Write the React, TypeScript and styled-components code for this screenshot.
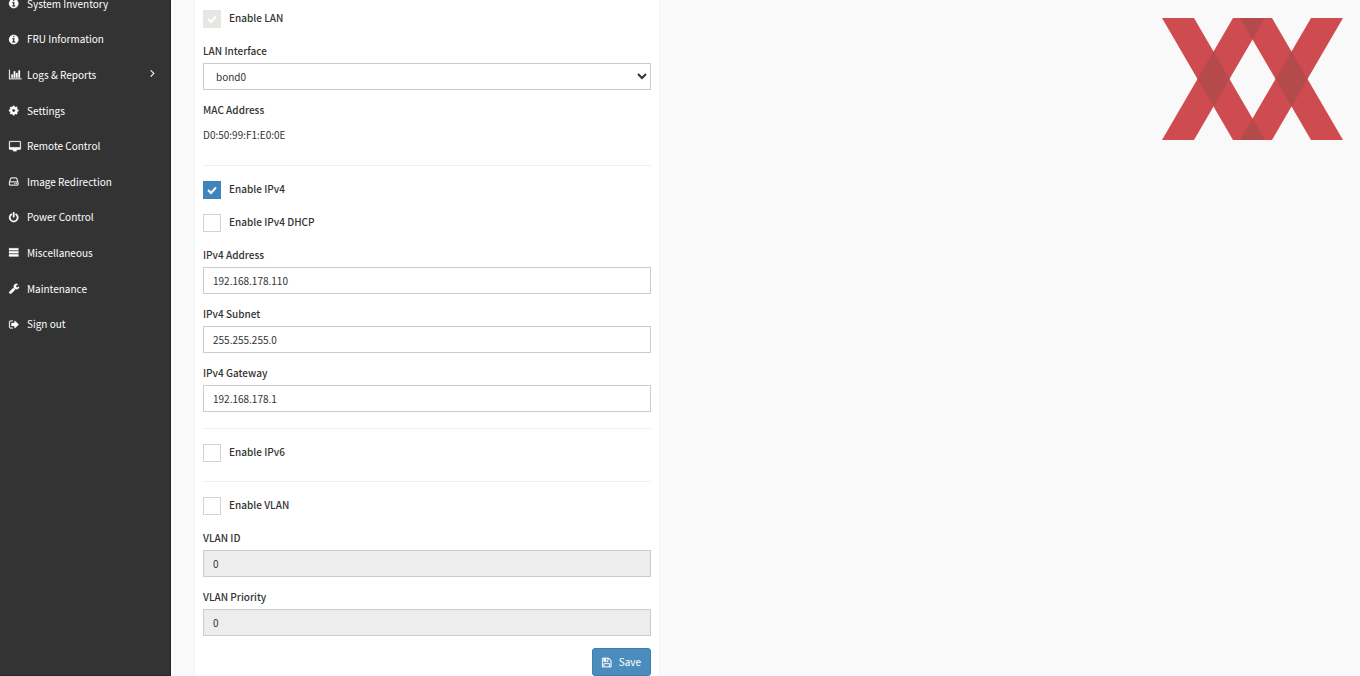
import React, { useState } from 'react';
import styled, { createGlobalStyle } from 'styled-components';

const GlobalStyle = createGlobalStyle`
  *, *::before, *::after { box-sizing: border-box; }
  body {
    margin: 0;
    background: #f9f9f9;
    color: #333;
    font-family: "Source Sans Pro", "Noto Sans CJK SC", "Noto Sans", sans-serif;
    font-size: 10px;
    line-height: 16px;
  }
  input, select, button { font: inherit; color: inherit; }
`;

const Page = styled.div`
  display: flex;
  min-height: 100vh;
  overflow: hidden;
`;

const Sidebar = styled.nav`
  flex: 0 0 171px;
  background: #333;
  border-right: 1px solid #222;
  border-bottom: 1px solid #2b2428;
  box-shadow: 1px 0 2px #fff;
`;

const Menu = styled.ul`
  display: flex;
  flex-direction: column;
  height: 356px;
  margin: -14px 0 0;
  padding: 0;
  list-style: none;
`;

const MenuItem = styled.li`
  flex: 1;
  display: flex;
`;

const MenuLink = styled.a`
  flex: 1;
  display: flex;
  align-items: center;
  padding: 0 15px 0 9px;
  color: #fff;
  text-decoration: none;
`;

const IconSlot = styled.span`
  display: flex;
  width: 18px;
`;

const MenuText = styled.span`
  flex: 1;
`;

const Chevron = styled.span`
  display: flex;
  padding-bottom: 4px;
`;

const Content = styled.main`
  flex: 1;
  display: grid;
  grid-template-columns: minmax(0, 2fr) minmax(0, 3fr);
  padding: 0 5px 0 24px;
`;

const Panel = styled.form`
  display: flex;
  flex-direction: column;
  padding: 10px 8px 0;
  background: #fff;
  box-shadow: 0 0 2px #e8e8e8;
`;

const Aside = styled.div`
  display: flex;
  justify-content: flex-end;
  align-items: flex-start;
  padding: 18px 12px 0 0;
`;

const CheckRow = styled.label`
  display: flex;
  align-items: flex-start;
  gap: 8px;
  height: 18px;
  margin-bottom: 15px;
  font-weight: 500;
`;

const CheckHolder = styled.span`
  position: relative;
  display: flex;
  svg {
    position: absolute;
    inset: 4px;
    pointer-events: none;
  }
`;

const CheckInput = styled.input`
  appearance: none;
  width: 18px;
  height: 18px;
  margin: 0;
  border: 1px solid #d2d2d2;
  background: #fff;
  &:checked { border-color: #3c85bd; background: #3c85bd; }
  &:disabled { border-color: #e6e6e3; background: #e6e6e3; }
`;

const Field = styled.div`
  display: flex;
  flex-direction: column;
  gap: 4px;
  margin-bottom: 12px;
`;

const FieldLabel = styled.label`
  font-weight: 500;
`;

const TextInput = styled.input`
  width: 100%;
  height: 27px;
  padding: 0 9px;
  border: 1px solid #ccc;
  border-radius: 0;
  background: #fff;
  &:disabled { background: #ededed; }
`;

const Select = styled.select`
  width: 100%;
  height: 27px;
  padding: 0 0 0 8px;
  border: 1px solid #ccc;
  border-radius: 0;
  background: #fff;
`;

const Value = styled.output`
  margin: 5px 0 6px;
`;

const Rule = styled.hr`
  width: 100%;
  height: 1px;
  margin: 4px 0 15px;
  border: 0;
  background: #eee;
`;

const Actions = styled.div`
  display: flex;
  justify-content: flex-end;
`;

const SaveButton = styled.button`
  display: flex;
  align-items: center;
  gap: 7px;
  height: 28px;
  padding: 0 9px;
  border: 1px solid #3c80b2;
  border-radius: 3px;
  background: #4a8dbd;
  color: #fff;
`;

const icons = {
  info: { w: 1536, x: 128, d: 'M1152 1376v-160q0-14-9-23t-23-9h-96v-512q0-14-9-23t-23-9h-320q-14 0-23 9t-9 23v160q0 14 9 23t23 9h96v320h-96q-14 0-23 9t-9 23v160q0 14 9 23t23 9h448q14 0 23-9t9-23zm-128-896v-160q0-14-9-23t-23-9h-192q-14 0-23 9t-9 23v160q0 14 9 23t23 9h192q14 0 23-9t9-23zm640 416q0 209-103 385.5t-279.5 279.5-385.5 103-385.5-103-279.5-279.5-103-385.5 103-385.5 279.5-279.5 385.5-103 385.5 103 279.5 279.5 103 385.5z' },
  chart: { w: 2048, x: 0, d: 'M640 896v512h-256v-512h256zm384-512v1024h-256v-1024h256zm1024 1152v128h-2048v-1536h128v1408h1920zm-640-896v768h-256v-768h256zm384-384v1152h-256v-1152h256z' },
  cog: { w: 1536, x: 128, d: 'M1152 896q0-106-75-181t-181-75-181 75-75 181 75 181 181 75 181-75 75-181zm512-109v222q0 12-8 23t-20 13l-185 28q-19 54-39 91 35 50 107 138 10 12 10 25t-9 23q-27 37-99 108t-94 71q-12 0-26-9l-138-108q-44 23-91 38-16 136-29 186-7 28-36 28h-222q-14 0-24.5-8.5t-11.5-21.5l-28-184q-49-16-90-37l-141 107q-10 9-25 9-14 0-25-11-126-114-165-168-7-10-7-23 0-12 8-23 15-21 51-66.5t54-70.5q-27-50-41-99l-183-27q-13-2-21-12.5t-8-23.5v-222q0-12 8-23t19-13l186-28q14-46 39-92-40-57-107-138-10-12-10-24 0-10 9-23 26-36 98.5-107.5t94.5-71.5q13 0 26 10l138 107q44-23 91-38 16-136 29-186 7-28 36-28h222q14 0 24.5 8.5t11.5 21.5l28 184q49 16 90 37l142-107q9-9 24-9 13 0 25 10 129 119 165 170 7 8 7 22 0 12-8 23-15 21-51 66.5t-54 70.5q26 50 41 98l183 28q13 2 21 12.5t8 23.5z' },
  desktop: { w: 1920, x: 0, d: 'M1792 992v-832q0-13-9.5-22.5t-22.5-9.5h-1600q-13 0-22.5 9.5t-9.5 22.5v832q0 13 9.5 22.5t22.5 9.5h1600q13 0 22.5-9.5t9.5-22.5zm128-832v1088q0 66-47 113t-113 47h-544q0 37 16 77.5t32 71 16 43.5q0 26-19 45t-45 19h-512q-26 0-45-19t-19-45q0-14 16-44t32-70 16-78h-544q-66 0-113-47t-47-113v-1088q0-66 47-113t113-47h1600q66 0 113 47t47 113z' },
  drive: { w: 1536, x: 128, d: 'M1168 1216q0 33-23.5 56.5t-56.5 23.5-56.5-23.5-23.5-56.5 23.5-56.5 56.5-23.5 56.5 23.5 23.5 56.5zm256 0q0 33-23.5 56.5t-56.5 23.5-56.5-23.5-23.5-56.5 23.5-56.5 56.5-23.5 56.5 23.5 23.5 56.5zm112 160v-320q0-13-9.5-22.5t-22.5-9.5h-1216q-13 0-22.5 9.5t-9.5 22.5v320q0 13 9.5 22.5t22.5 9.5h1216q13 0 22.5-9.5t9.5-22.5zm-1230-480h1180l-157-482q-4-13-16-21.5t-26-8.5h-782q-14 0-26 8.5t-16 21.5zm1358 160v320q0 66-47 113t-113 47h-1216q-66 0-113-47t-47-113v-320q0-25 16-75l197-606q17-53 63-86t101-33h782q55 0 101 33t63 86l197 606q16 50 16 75z' },
  power: { w: 1536, x: 128, d: 'M1664 896q0 156-61 298t-164 245-245 164-298 61-298-61-245-164-164-245-61-298q0-182 80.5-343t226.5-270q43-32 95.5-25t83.5 50q32 42 24.5 94.5t-49.5 84.5q-98 74-151.5 181t-53.5 228q0 104 40.5 198.5t109.5 163.5 163.5 109.5 198.5 40.5 198.5-40.5 163.5-109.5 109.5-163.5 40.5-198.5q0-121-53.5-228t-151.5-181q-42-32-49.5-84.5t24.5-94.5q31-43 84-50t95 25q146 109 226.5 270t80.5 343zm-640-768v640q0 52-38 90t-90 38-90-38-38-90v-640q0-52 38-90t90-38 90 38 38 90z' },
  bars: { w: 1536, x: 128, d: 'M128 200h1536v330h-1536zM128 700h1536v330h-1536zM128 1200h1536v330h-1536z' },
  wrench: { w: 1664, x: 64, d: 'M448 1472q0-26-19-45t-45-19-45 19-19 45 19 45 45 19 45-19 19-45zm644-420l-682 682q-37 37-90 37-52 0-91-37l-106-108q-38-36-38-90 0-53 38-91l681-681q39 98 114.5 173.5t173.5 114.5zm634-435q0 39-23 106-47 134-164.5 217.5t-258.5 83.5q-185 0-316.5-131.5t-131.5-316.5 131.5-316.5 316.5-131.5q58 0 121.5 16.5t107.5 46.5q16 11 16 28t-16 28l-293 169v224l193 107q5-3 79-48.5t135.5-81 70.5-35.5q15 0 23.5 10t8.5 25z' },
  signOut: { w: 1664, x: 64, d: 'M704 1440q0 4 1 20t.5 26.5-3 23.5-10 19.5-20.5 6.5h-320q-119 0-203.5-84.5t-84.5-203.5v-704q0-119 84.5-203.5t203.5-84.5h320q13 0 22.5 9.5t9.5 22.5q0 4 1 20t.5 26.5-3 23.5-10 19.5-20.5 6.5h-320q-66 0-113 47t-47 113v704q0 66 47 113t113 47h312l11.5 1 11.5 3 8 5.5 7 9 2 13.5zm928-544q0 26-19 45l-544 544q-19 19-45 19t-45-19-19-45v-288h-448q-26 0-45-19t-19-45v-384q0-26 19-45t45-19h448v-288q0-26 19-45t45-19 45 19l544 544q19 19 19 45z' },
  angle: { w: 768, x: 512, d: 'M1171 960q0 13-10 23l-466 466q-10 10-23 10t-23-10l-50-50q-10-10-10-23t10-23l393-393-393-393q-10-10-10-23t10-23l50-50q10-10 23-10t23 10l466 466q10 10 10 23z' },
  save: { w: 1536, x: 128, d: 'M512 1536h768v-384h-768v384zm896 0h128v-896q0-14-10-38.5t-20-34.5l-281-281q-10-10-34-20t-39-10v416q0 40-28 68t-68 28h-576q-40 0-68-28t-28-68v-416h-128v1280h128v-416q0-40 28-68t68-28h832q40 0 68 28t28 68v416zm-384-928v-320q0-13-9.5-22.5t-22.5-9.5h-192q-13 0-22.5 9.5t-9.5 22.5v320q0 13 9.5 22.5t22.5 9.5h192q13 0 22.5-9.5t9.5-22.5zm640 32v928q0 40-28 68t-68 28h-1344q-40 0-68-28t-28-68v-1344q0-40 28-68t68-28h928q40 0 88 20t76 48l280 280q28 28 48 76t20 88z' },
};

type IconName = keyof typeof icons;

function Icon({ name, size = 11 }: { name: IconName; size?: number }) {
  const { w, x, d } = icons[name];
  return (
    <svg
      height={size}
      width={(size * w) / 1792}
      viewBox={`${x} 0 ${w} 1792`}
      fill="currentColor"
      stroke="currentColor"
      strokeWidth="40"
      overflow="visible"
      aria-hidden="true"
    >
      <path d={d} />
    </svg>
  );
}

const menu: { icon: IconName; text: string; expands?: boolean }[] = [
  { icon: 'info', text: 'System Inventory' },
  { icon: 'info', text: 'FRU Information' },
  { icon: 'chart', text: 'Logs & Reports', expands: true },
  { icon: 'cog', text: 'Settings' },
  { icon: 'desktop', text: 'Remote Control' },
  { icon: 'drive', text: 'Image Redirection' },
  { icon: 'power', text: 'Power Control' },
  { icon: 'bars', text: 'Miscellaneous' },
  { icon: 'wrench', text: 'Maintenance' },
  { icon: 'signOut', text: 'Sign out' },
];

function Check({ label, on = false, disabled = false }: { label: string; on?: boolean; disabled?: boolean }) {
  const [checked, setChecked] = useState(on);
  return (
    <CheckRow>
      <CheckHolder>
        <CheckInput type="checkbox" checked={checked} disabled={disabled} onChange={(e) => setChecked(e.target.checked)} />
        {checked && (
          <svg width="10" height="10" viewBox="0 0 10 10" fill="none" stroke="#fff" strokeWidth="2" aria-hidden="true">
            <path d="M1 5l3 3 5-5.5" />
          </svg>
        )}
      </CheckHolder>
      {label}
    </CheckRow>
  );
}

function TextField({ id, label, value, disabled }: { id: string; label: string; value: string; disabled?: boolean }) {
  return (
    <Field>
      <FieldLabel htmlFor={id}>{label}</FieldLabel>
      <TextInput id={id} type="text" defaultValue={value} disabled={disabled} />
    </Field>
  );
}

function Logo() {
  return (
    <svg width="181" height="122" viewBox="0 0 181 122" role="img" aria-label="XX">
      <g fill="#ce4b50">
        <path d="M0 0h32l71 122H71z" />
        <path d="M71 0h32L32 122H0z" />
        <path d="M78 0h32l71 122h-32z" />
        <path d="M149 0h32l-71 122H78z" />
      </g>
      <g fill="#b54a4d">
        <path d="M51.5 33.500L67.500 61 51.500 88.500 35.500 61z" />
        <path d="M129.500 33.500L145.500 61 129.500 88.500 113.500 61z" />
        <path d="M78 0h25L90.500 21.500z" />
        <path d="M78 122h25L90.500 100.500z" />
      </g>
    </svg>
  );
}

export default function App() {
  return (
    <>
      <GlobalStyle />
      <Page>
        <Sidebar>
          <Menu>
            {menu.map(({ icon, text, expands }) => (
              <MenuItem key={text}>
                <MenuLink href="#">
                  <IconSlot><Icon name={icon} /></IconSlot>
                  <MenuText>{text}</MenuText>
                  {expands && <Chevron><Icon name="angle" size={12} /></Chevron>}
                </MenuLink>
              </MenuItem>
            ))}
          </Menu>
        </Sidebar>
        <Content>
          <Panel onSubmit={(e) => e.preventDefault()}>
            <Check label="Enable LAN" on disabled />
            <Field>
              <FieldLabel htmlFor="lan">LAN Interface</FieldLabel>
              <Select id="lan"><option>bond0</option></Select>
            </Field>
            <Field>
              <FieldLabel htmlFor="mac">MAC Address</FieldLabel>
              <Value id="mac">D0:50:99:F1:E0:0E</Value>
            </Field>
            <Rule />
            <Check label="Enable IPv4" on />
            <Check label="Enable IPv4 DHCP" />
            <TextField id="ip" label="IPv4 Address" value="192.168.178.110" />
            <TextField id="subnet" label="IPv4 Subnet" value="255.255.255.0" />
            <TextField id="gateway" label="IPv4 Gateway" value="192.168.178.1" />
            <Rule />
            <Check label="Enable IPv6" />
            <Rule />
            <Check label="Enable VLAN" />
            <TextField id="vlan-id" label="VLAN ID" value="0" disabled />
            <TextField id="vlan-priority" label="VLAN Priority" value="0" disabled />
            <Actions>
              <SaveButton type="submit"><Icon name="save" />Save</SaveButton>
            </Actions>
          </Panel>
          <Aside><Logo /></Aside>
        </Content>
      </Page>
    </>
  );
}
